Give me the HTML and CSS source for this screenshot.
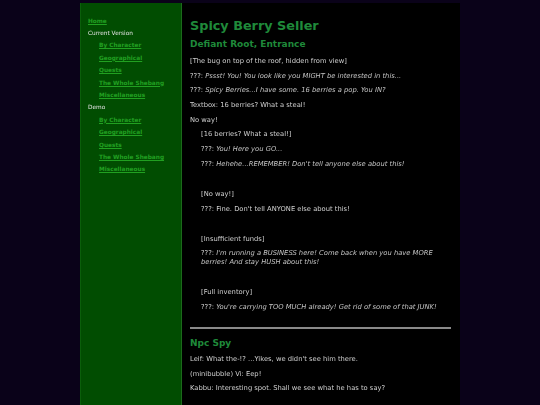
FILE: index.html
```html
<!DOCTYPE html>
<html>
<head>
<meta charset="utf-8">
<link rel="stylesheet" href="styles.css">
</head>
<body>
<div class="page">
  <nav class="sidebar">
    <ul class="menu">
      <li><a href="#">Home</a></li>
      <li class="label">Current Version</li>
      <li class="sub"><a href="#">By Character</a></li>
      <li class="sub"><a href="#">Geographical</a></li>
      <li class="sub"><a href="#">Quests</a></li>
      <li class="sub"><a href="#">The Whole Shebang</a></li>
      <li class="sub"><a href="#">Miscellaneous</a></li>
      <li class="label">Demo</li>
      <li class="sub"><a href="#">By Character</a></li>
      <li class="sub"><a href="#">Geographical</a></li>
      <li class="sub"><a href="#">Quests</a></li>
      <li class="sub"><a href="#">The Whole Shebang</a></li>
      <li class="sub"><a href="#">Miscellaneous</a></li>
    </ul>
  </nav>
  <main class="content">
    <h1>Spicy Berry Seller</h1>
    <h2>Defiant Root, Entrance</h2>
    <p>[The bug on top of the roof, hidden from view]</p>
    <p>???: <em>Pssst! You! You look like you MIGHT be interested in this...</em></p>
    <p>???: <em>Spicy Berries...I have some. 16 berries a pop. You IN?</em></p>
    <p>Textbox: 16 berries? What a steal!</p>
    <p>No way!</p>
    <div class="branch">
      <p>[16 berries? What a steal!]</p>
      <p>???: <em>You! Here you GO...</em></p>
      <p>???: <em>Hehehe...REMEMBER! Don't tell anyone else about this!</em></p>
      <p class="gap">[No way!]</p>
      <p>???: Fine. Don't tell ANYONE else about this!</p>
      <p class="gap">[Insufficient funds]</p>
      <p>???: <em>I'm running a BUSINESS here! Come back when you have MORE berries! And stay HUSH about this!</em></p>
      <p class="gap">[Full inventory]</p>
      <p>???: <em>You're carrying TOO MUCH already! Get rid of some of that JUNK!</em></p>
    </div>
    <hr class="rule">
    <h2 class="npc">Npc Spy</h2>
    <p>Leif: What the-!? ...Yikes, we didn't see him there.</p>
    <p>(minibubble) Vi: Eep!</p>
    <p>Kabbu: Interesting spot. Shall we see what he has to say?</p>
  </main>
</div>
</body>
</html>
```
FILE: styles.css
```css
html, body {
  margin: 0;
  padding: 0;
  background: #0a0219;
}
body {
  font-family: "DejaVu Sans", Verdana, sans-serif;
}
.page {
  width: 380px;
  margin: 3px auto 0;
  display: flex;
  align-items: stretch;
  min-height: 420px;
}
.sidebar {
  width: 100px;
  flex: none;
  background: #014d01;
  border-left: 1px solid #0b5e0b;
  border-right: 1px solid #1c6a1c;
}
.menu {
  list-style: none;
  margin: 0;
  padding: 11.5px 0 0 7px;
  font-size: 5.8px;
  line-height: 12.4px;
}
.menu li {
  color: #d8e6d8;
}
.menu li.label {
  filter: grayscale(1);
}
.menu li.sub {
  padding-left: 11px;
}
.menu a {
  color: #21a021;
  font-weight: bold;
  text-decoration: underline;
}
.content {
  flex: 1;
  background: #000;
  padding: 16px 9px 0 8px;
  color: #cfcfcf;
  font-size: 6.75px;
  line-height: 9px;
}
.content h1 {
  margin: 0;
  font-size: 12.8px;
  line-height: 14px;
  color: #1f8a3a;
  font-weight: bold;
}
.content h2 {
  margin: 6px 0 8px;
  font-size: 9px;
  line-height: 10px;
  color: #1f8a3a;
  font-weight: bold;
}
.content p {
  margin: 0 0 5.7px;
  filter: grayscale(1);
}
.content em {
  color: #c4c4c4;
}
.branch {
  padding-left: 11px;
}
.branch p.gap {
  margin-top: 21px;
}
.rule {
  border: 0;
  height: 2px;
  background: #8a8a8a;
  margin: 15.5px 0 9px;
}
.content h2.npc {
  margin-top: 0;
  margin-bottom: 6.5px;
}
```
